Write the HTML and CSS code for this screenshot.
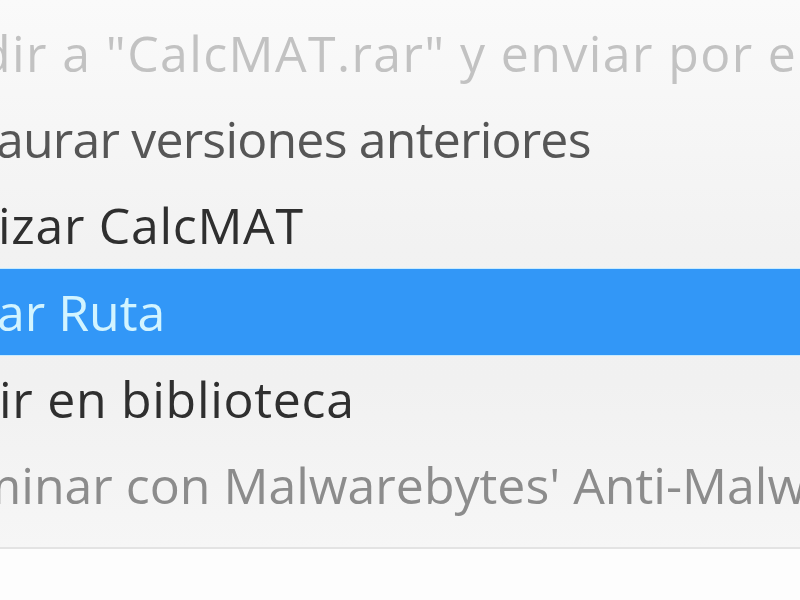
FILE: index.html
```html
<!DOCTYPE html>
<html lang="es">
  <head>
    <meta charset="UTF-8" />
    <title>Menú contextual</title>
    <link rel="stylesheet" href="styles.css">
  </head>
  <body>
    <div class="menu">
      <ul class="menu-list">
        <li class="menu-item menu-item--faint"><span class="label shift-20 track-wide">dir a "CalcMAT.rar" y enviar por email</span></li>
        <li class="menu-item menu-item--soft"><span class="label shift-4 track-tight">aurar versiones anteriores</span></li>
        <li class="menu-item"><span class="label shift-2 track-loose">izar CalcMAT</span></li>
        <li class="menu-item menu-item--selected"><span class="label shift-3">ar Ruta</span></li>
        <li class="menu-item"><span class="label shift-1 track-loose">ir en biblioteca</span></li>
        <li class="menu-item menu-item--grey"><span class="label shift-25">minar con Malwarebytes' Anti-Malware</span></li>
      </ul>
    </div>
  </body>
</html>
```

FILE: styles.css
```css
body {
  margin: 0;
  background: #fdfdfd;
  font-family: "Open Sans", "Noto Sans", sans-serif;
}

.menu {
  width: 800px;
  height: 549px;
  box-sizing: border-box;
  padding-top: 10px;
  overflow: hidden;
  background: linear-gradient(#fafafa, #f2f2f2 45%, #f1f1f1 70%, #f6f6f6);
  border-bottom: 2px solid #e3e3e3;
}

.menu-list {
  list-style: none;
  margin: 0;
  padding: 0;
}

.menu-item {
  height: 86px;
  line-height: 86px;
  font-size: 50px;
  white-space: nowrap;
  overflow: hidden;
  color: #2f2f2f;
}

.menu-item--faint {
  color: #c2c2c2;
}

.menu-item--soft {
  color: #565656;
}

.menu-item--grey {
  color: #8c8c8c;
}

.menu-item--selected {
  background: #3297f7;
  color: #d2f4ff;
  border-top: 1px solid #c8ebff;
  border-bottom: 1px solid #c8ebff;
}

.label {
  display: inline-block;
}

.track-wide {
  letter-spacing: 1.4px;
}

.track-loose {
  letter-spacing: 0.7px;
}

.track-tight {
  letter-spacing: -0.8px;
}

.shift-1 {
  margin-left: -1px;
}

.shift-2 {
  margin-left: -2px;
}

.shift-3 {
  margin-left: -3px;
}

.shift-4 {
  margin-left: -4px;
}

.shift-20 {
  margin-left: -20px;
}

.shift-25 {
  margin-left: -25px;
}
```
